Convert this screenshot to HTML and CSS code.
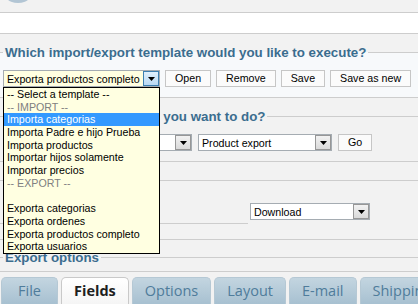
FILE: index.html
```html
<!DOCTYPE html>
<html lang="en">
<head>
  <meta charset="UTF-8" />
  <meta name="viewport" content="width=device-width, initial-scale=1.0" />
  <title>Export templates</title>
  <link rel="stylesheet" href="styles.css">
</head>
<body>
  <header class="topbar"><div class="logo"></div></header>
  <div class="toolbar"></div>

  <fieldset class="box box-template">
    <legend>Which import/export template would you like to execute?</legend>
    <div class="row">
      <div class="picker">
        <div class="select select-open">
          <span class="select-value">Exporta productos completo</span>
          <span class="select-arrow"><svg width="7" height="4" viewBox="0 0 7 4"><path d="M0 0h7L3.5 4z"/></svg></span>
        </div>
        <ul class="options">
          <li>-- Select a template --</li>
          <li class="group">-- IMPORT --</li>
          <li class="active">Importa categorias</li>
          <li>Importa Padre e hijo Prueba</li>
          <li>Importa productos</li>
          <li>Importar hijos solamente</li>
          <li>Importar precios</li>
          <li class="group">-- EXPORT --</li>
          <li>&nbsp;</li>
          <li>Exporta categorias</li>
          <li>Exporta ordenes</li>
          <li>Exporta productos completo</li>
          <li>Exporta usuarios</li>
        </ul>
      </div>
      <button class="btn">Open</button>
      <button class="btn">Remove</button>
      <button class="btn">Save</button>
      <button class="btn">Save as new</button>
    </div>
  </fieldset>

  <fieldset class="box box-action">
    <legend>What do you want to do?</legend>
    <div class="row row-action">
      <div class="select select-type">
        <span class="select-value"></span>
        <span class="select-arrow"><svg width="7" height="4" viewBox="0 0 7 4"><path d="M0 0h7L3.5 4z"/></svg></span>
      </div>
      <div class="select select-op">
        <span class="select-value">Product export</span>
        <span class="select-arrow"><svg width="7" height="4" viewBox="0 0 7 4"><path d="M0 0h7L3.5 4z"/></svg></span>
      </div>
      <button class="btn">Go</button>
    </div>
  </fieldset>

  <div class="line-row"></div>
  <div class="form-row">
    <div class="form-label"></div>
    <div class="form-field">
      <div class="select select-dl">
        <span class="select-value">Download</span>
        <span class="select-arrow"><svg width="7" height="4" viewBox="0 0 7 4"><path d="M0 0h7L3.5 4z"/></svg></span>
      </div>
    </div>
  </div>
  <div class="spacer-row"></div>

  <fieldset class="box box-export">
    <legend>Export options</legend>
    <div class="tab-wrap">
      <ul class="tabs">
        <li class="tab">File</li>
        <li class="tab active">Fields</li>
        <li class="tab">Options</li>
        <li class="tab">Layout</li>
        <li class="tab">E-mail</li>
        <li class="tab">Shipping</li>
      </ul>
    </div>
  </fieldset>
</body>
</html>
```

FILE: styles.css
```css
:root {
  --line: #cdcdcd;
  --heading: #3b6d8f;
  --field-border: #a5acb2;
}

body {
  margin: 0;
  height: 304px;
  overflow: hidden;
  background: #f2f2f2;
  font-family: "Liberation Sans", Arial, sans-serif;
  font-size: 10.67px;
  color: #000;
}

.topbar {
  height: 12px;
  border-bottom: 1px solid var(--line);
  overflow: hidden;
}

.logo {
  width: 36px;
  height: 36px;
  margin-top: -33px;
  border-radius: 50%;
  background: #b2c5d4;
}

.toolbar {
  height: 20px;
  background: #fff;
  border-bottom: 1px solid var(--line);
}

/* fieldsets */
.box {
  margin: 11px -2px 0;
  padding: 10px 4px;
  border: 1px solid var(--line);
  min-width: 0;
}

.box legend {
  padding: 0 2px;
  font-size: 13.33px;
  font-weight: bold;
  line-height: 15px;
  color: var(--heading);
}

.box-template {
  background: #f7f9fb;
}

.box-action legend {
  margin-left: 102px;
}

.box-export {
  margin-top: 10px;
  padding: 6px 0 0;
}

.box-export legend {
  margin-left: 4px;
}

.row {
  display: flex;
  align-items: flex-start;
  gap: 5px;
}

.row-action {
  gap: 6px;
}

/* fake selects */
.select {
  display: flex;
  align-items: center;
  box-sizing: border-box;
  height: 17px;
  padding-left: 3px;
  border: 1px solid var(--field-border);
  background: #fff;
}

.select-value {
  flex: 1;
  white-space: nowrap;
  overflow: hidden;
}

.select-arrow {
  display: flex;
  align-items: center;
  justify-content: center;
  box-sizing: border-box;
  width: 16px;
  height: 15px;
  border: 1px solid #979797;
  background: linear-gradient(#f2f2f2, #dadada);
}

.select-open {
  background: #ffffe1;
}

.select-open .select-arrow {
  border-color: #3c7fb1;
  background: linear-gradient(#dff0fd, #b8d8f3);
}

.picker {
  position: relative;
  width: 157px;
}

.select-type { width: 189px; }
.select-op { width: 134px; }
.select-dl { width: 120px; }

.options {
  position: absolute;
  top: 17px;
  left: 0;
  right: 0;
  z-index: 2;
  margin: 0;
  padding: 0;
  list-style: none;
  background: #ffffe1;
  border: 1px solid #000;
}

.options li {
  height: 12.7px;
  line-height: 12.7px;
  padding-left: 3px;
  white-space: nowrap;
}

.options .group {
  color: #808080;
}

.options .active {
  background: #3399ff;
  color: #fff;
}

.btn {
  height: 17px;
  padding: 0 9px;
  border: 1px solid #c6c6c6;
  border-radius: 0;
  background: #fbfbfb;
  font: inherit;
  line-height: 15px;
  color: #000;
}

/* output rows */
.line-row {
  height: 18px;
  border-bottom: 1px solid var(--line);
}

.form-row {
  display: flex;
}

.form-label {
  width: 248px;
  height: 42px;
  border-bottom: 1px solid var(--line);
}

.form-field {
  padding: 22px 0 0 2px;
}

.spacer-row {
  height: 15px;
  border-bottom: 1px solid var(--line);
}

/* tabs */
.tab-wrap {
  border-top: 1px solid var(--line);
  padding-top: 5px;
}

.tabs {
  display: flex;
  gap: 3px;
  margin: 0;
  padding: 0 0 0 2px;
  list-style: none;
}

.tab {
  flex-shrink: 0;
  box-sizing: border-box;
  min-width: 57px;
  height: 30px;
  padding: 3px 12px 0;
  border: 1px solid #b5c8d4;
  border-bottom: none;
  border-radius: 5px 5px 0 0;
  background: linear-gradient(#c3d5e0, #a4becf);
  font: 14.5px/20px "Open Sans", sans-serif;
  color: #4f7c9b;
  text-align: center;
  white-space: nowrap;
}

.tab.active {
  border-color: #c9c9c9;
  background: linear-gradient(#fff, #f4f4f4);
  font-weight: bold;
  color: #1e1e1e;
}
```
